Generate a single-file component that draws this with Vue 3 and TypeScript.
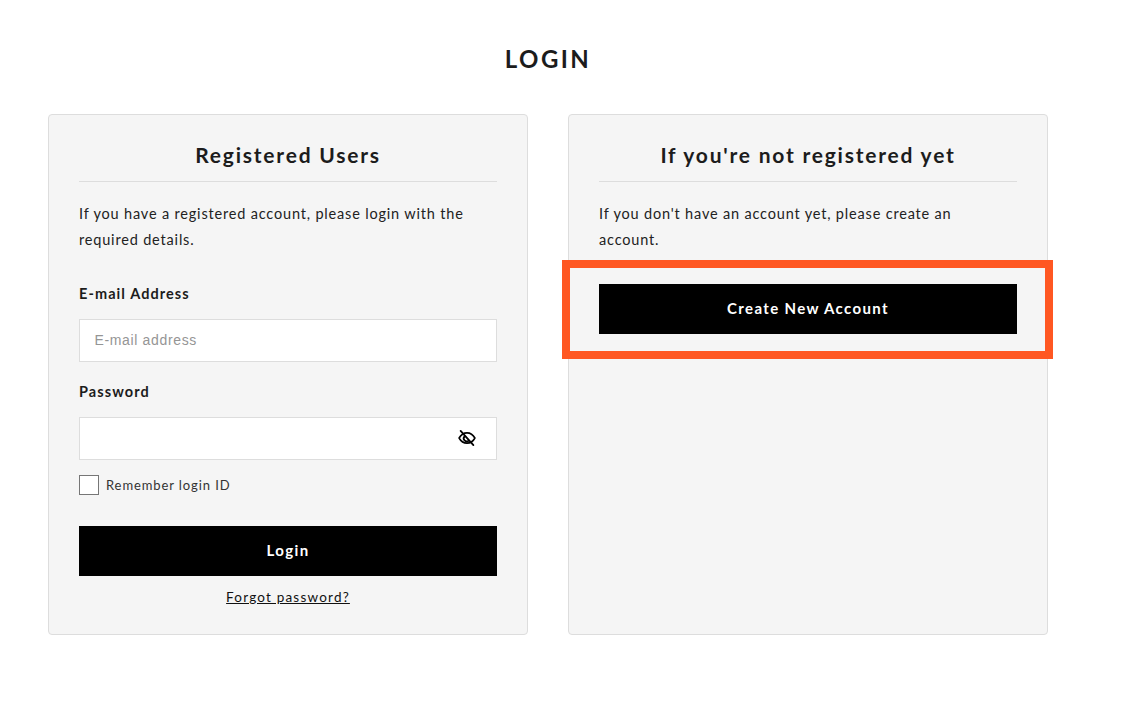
<script setup lang="ts">
const title = 'LOGIN'
</script>

<template>
  <main class="page">
    <h1 class="title">{{ title }}</h1>
    <div class="cards">
      <section class="card">
        <h2 class="card-title">Registered Users</h2>
        <p class="intro">If you have a registered account, please login with the required details.</p>
        <label class="label first" for="email">E-mail Address</label>
        <input id="email" class="input" type="text" placeholder="E-mail address" />
        <label class="label second" for="pw">Password</label>
        <div class="pw-wrap">
          <input id="pw" class="input" type="password" />
          <svg class="eye" viewBox="0 0 24 24" width="18" height="18" fill="none" stroke="#000" stroke-width="2.200" stroke-linecap="round" stroke-linejoin="round">
            <path d="M1.500 12c2.500-4.600 5.900-6.900 10.500-6.900s8 2.300 10.500 6.900c-2.500 4.600-5.900 6.900-10.500 6.900S4 16.600 1.500 12Z" />
            <path d="M8.800 9.700a4 4 0 0 0 5.500 5.800" stroke-width="2.400" />
            <path d="M3.500 2.500l17 19" stroke-width="2.400" />
          </svg>
        </div>
        <label class="remember"><span class="box"></span><span>Remember login ID</span></label>
        <button class="btn login" type="button">Login</button>
        <a class="forgot" href="#">Forgot password?</a>
      </section>
      <section class="card">
        <h2 class="card-title">If you're not registered yet</h2>
        <p class="intro">If you don't have an account yet, please create an<br />account.</p>
        <button class="btn create" type="button">Create New Account</button>
        <div class="highlight"></div>
      </section>
    </div>
  </main>
</template>

<style>
html, body { margin: 0; background: #fff; }
</style>

<style scoped>
.page {
  width: 1146px;
  height: 710px;
  box-sizing: border-box;
  padding: 43px 98px 0 48px;
  font-family: "Lato", "Open Sans", sans-serif;
  color: #1c1c1c;
  overflow: hidden;
}
.title {
  margin: 0 0 40px;
  height: 31px;
  line-height: 31px;
  text-align: center;
  font-size: 24px;
  font-weight: 700;
  letter-spacing: 2.4px;
}
.cards { display: flex; gap: 40px; }
.card {
  position: relative;
  width: 480px;
  height: 521px;
  box-sizing: border-box;
  padding: 26px 30px 0;
  background: #f5f5f5;
  border: 1px solid #ddd;
  border-radius: 4px;
}
.card-title {
  margin: 0;
  height: 40px;
  line-height: 27px;
  box-sizing: content-box;
  text-align: center;
  font-size: 21px;
  font-weight: 700;
  letter-spacing: 1.78px;
  border-bottom: 1px solid #ddd;
}
.intro {
  margin: 19px 0 0;
  font-size: 14.5px;
  line-height: 26px;
  letter-spacing: 0.82px;
  color: #222;
}
.label {
  display: block;
  font-size: 14.5px;
  line-height: 20px;
  font-weight: 700;
  letter-spacing: 1.08px;
}
.first { margin-top: 31px; margin-bottom: 15px; }
.second { margin-top: 20px; margin-bottom: 15px; }
.input {
  display: block;
  width: 100%;
  height: 43px;
  box-sizing: border-box;
  padding: 0 15px 2px 14.500px;
  background: #fff;
  border: 1px solid #ddd;
  border-radius: 0;
  outline: none;
  font-family: "Liberation Sans", Arial, sans-serif;
  font-size: 14px;
  letter-spacing: 0.65px;
}
.input::placeholder { color: #959595; opacity: 1; }
.pw-wrap { position: relative; }
.eye { position: absolute; right: 21px; top: 12px; }
.remember {
  display: flex;
  align-items: center;
  gap: 7px;
  margin-top: 15px;
  height: 20px;
  font-size: 13px;
  letter-spacing: 0.9px;
  color: #333;
}
.box {
  width: 20px;
  height: 20px;
  box-sizing: border-box;
  background: #fff;
  border: 1px solid #767676;
}
.btn {
  display: block;
  width: 100%;
  height: 50px;
  padding: 0 0 2px;
  border: 0;
  border-radius: 0;
  background: #000;
  color: #fff;
  font-family: inherit;
  font-size: 15px;
  font-weight: 700;
  letter-spacing: 1.35px;
  cursor: pointer;
}
.login { margin-top: 31px; }
.create { margin-top: 31px; }
.forgot {
  display: block;
  width: fit-content;
  margin: 12px auto 0;
  font-size: 13.5px;
  line-height: 18px;
  letter-spacing: 1.2px;
  color: #111;
  text-decoration: underline;
}
.highlight {
  position: absolute;
  left: -7px;
  top: 145px;
  width: 491px;
  height: 99px;
  box-sizing: border-box;
  border: 8px solid #ff5722;
  pointer-events: none;
}
</style>
